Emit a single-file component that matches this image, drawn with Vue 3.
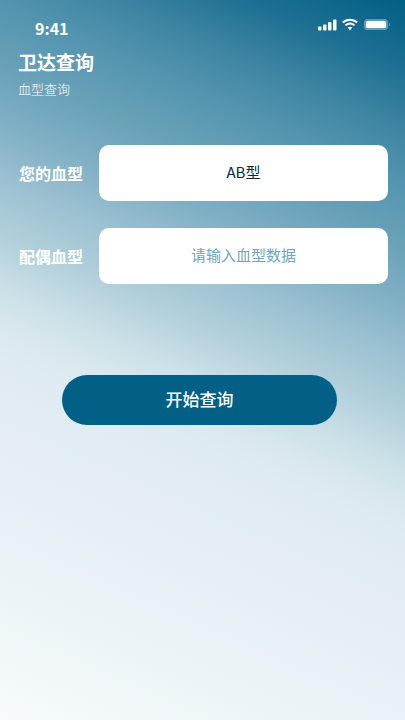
<script setup>
import { ref } from 'vue'

const ownType = ref('AB型')
const partnerType = ref('')
</script>

<template>
  <main class="screen">
    <div class="status">
      <span class="time">9:41</span>
      <svg class="indicators" viewBox="0 0 74 16" aria-hidden="true">
        <g fill="#fff">
          <rect x="0" y="10.500" width="3.500" height="4" rx="1" />
          <rect x="5" y="8.500" width="3.500" height="6" rx="1" />
          <rect x="10" y="6" width="3.500" height="8.500" rx="1" />
          <rect x="15" y="3.500" width="3.500" height="11" rx="1" />
          <path d="M29.600 11.600 A4.200 4.200 0 0 1 34.400 11.600 L32 14.200 Z" />
          <rect x="48" y="5" width="20" height="7" rx="1.500" />
        </g>
        <g fill="none" stroke="#fff" stroke-width="2">
          <path d="M24.800 6.600 A10.500 10.500 0 0 1 39.200 6.600" />
          <path d="M27.500 9.400 A6.500 6.500 0 0 1 36.500 9.400" />
        </g>
        <rect x="47" y="4" width="22" height="9" rx="3" fill="none" stroke="#fff" stroke-opacity="0.350" stroke-width="2" />
        <path d="M71 6.500 Q73 8.500 71 10.500 Z" fill="#fff" fill-opacity="0.400" />
      </svg>
    </div>

    <header class="heading">
      <h1>卫达查询</h1>
      <p>血型查询</p>
    </header>

    <form class="form" @submit.prevent>
      <div class="field">
        <label for="own">您的血型</label>
        <input id="own" v-model="ownType" type="text" />
      </div>
      <div class="field">
        <label for="partner">配偶血型</label>
        <input id="partner" v-model="partnerType" type="text" placeholder="请输入血型数据" />
      </div>
      <button type="submit">开始查询</button>
    </form>
  </main>
</template>

<style>
body {
  margin: 0;
}
</style>

<style scoped>
.screen {
  box-sizing: border-box;
  min-height: 100vh;
  padding: 16px 17px 24px 18px;
  color: #fff;
  font-family: "Noto Sans CJK SC", sans-serif;
  background: linear-gradient(
    204deg,
    #015f86 0%,
    #1f7093 8%,
    #4087a3 15%,
    #5293af 20%,
    #68a1b7 27%,
    #82b0c5 34%,
    #9cc1d1 40%,
    #b1cfda 46%,
    #cbe0e7 52%,
    #dbe9ee 57%,
    #e0ecf1 62%,
    #e6eff6 73%,
    #ebf3f6 83%,
    #f7fbfd 100%
  );
}

.status {
  display: flex;
  justify-content: space-between;
  height: 32px;
}

.time {
  padding: 0 17px;
  font-size: 16px;
  font-weight: 700;
  line-height: 24px;
}

.indicators {
  width: 74px;
  height: 16px;
  margin-right: -4px;
}

.heading h1 {
  margin: 0;
  font-size: 19px;
  font-weight: 700;
  line-height: 28px;
}

.heading p {
  margin: 4px 0 0;
  font-size: 13px;
  font-weight: 300;
  line-height: 18px;
}

.form {
  display: flex;
  flex-direction: column;
  gap: 27px;
  margin-top: 47px;
}

.field {
  display: flex;
  align-items: center;
}

label {
  flex: none;
  width: 81px;
  padding-left: 1px;
  box-sizing: border-box;
  font-size: 16px;
  font-weight: 700;
  line-height: 24px;
}

input {
  flex: 1;
  min-width: 0;
  height: 56px;
  box-sizing: border-box;
  padding: 0 12px 3px;
  border: 0;
  border-radius: 10px;
  background: #fff;
  color: #072c3e;
  font-family: inherit;
  font-size: 15px;
  text-align: center;
}

input::placeholder {
  color: #70a5be;
  opacity: 1;
}

button {
  height: 50px;
  margin: 64px 51px 0 44px;
  padding: 0 0 3px;
  border: 0;
  border-radius: 25px;
  background: #025f86;
  color: #fff;
  font-family: inherit;
  font-size: 17px;
  font-weight: 500;
}
</style>
